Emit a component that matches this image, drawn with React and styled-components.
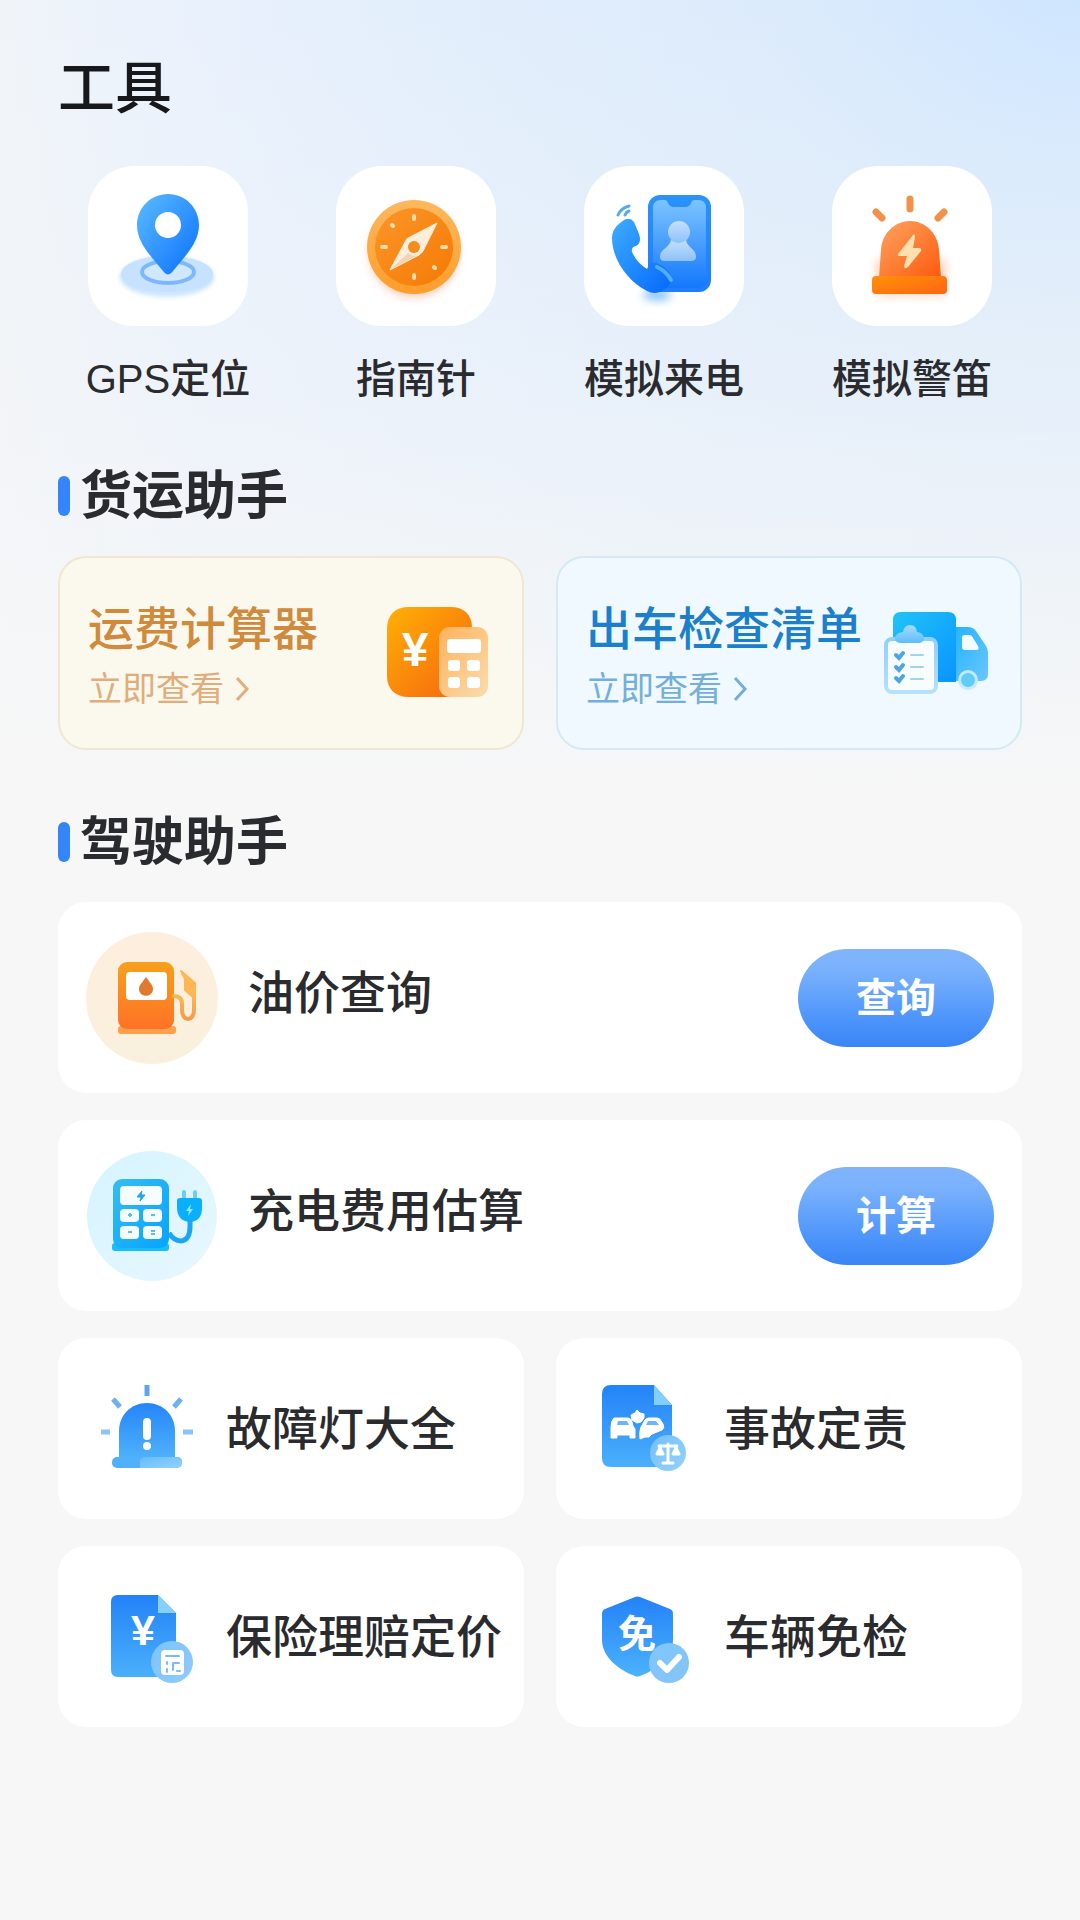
import React from 'react';
import styled, { createGlobalStyle } from 'styled-components';

const GlobalStyle = createGlobalStyle`
  * {
    box-sizing: border-box;
  }

  body {
    margin: 0;
    background: #f7f7f7;
    font-family: 'Liberation Sans', 'Noto Sans CJK SC', sans-serif;
    color: #2a2b2e;
  }
`;

const Page = styled.main`
  min-height: 100vh;
  padding: 52px 0 60px;
  background:
    linear-gradient(to bottom, rgba(247, 247, 247, 0) 0, rgba(247, 247, 247, 0.35) 400px, #f7f7f7 800px),
    radial-gradient(circle 900px at 100% 0, #cfe6ff 0, rgba(218, 234, 251, 0.8) 35%, rgba(222, 236, 252, 0) 100%),
    linear-gradient(to right, #f0f4f9 0, #e9f1fc 200px, #e2eefb 100%);
`;

const Title = styled.h1`
  margin: 0;
  padding: 0 58px;
  font-size: 57px;
  line-height: 72px;
  font-weight: 500;
  color: #17181b;
`;

const ToolNav = styled.nav`
  display: grid;
  grid-template-columns: repeat(4, 1fr);
  margin-top: 42px;
  padding: 0 44px;
`;

const ToolLink = styled.a`
  display: flex;
  flex-direction: column;
  align-items: center;
  gap: 28px;
  font-size: 40px;
  line-height: 50px;
  font-weight: 500;
  color: inherit;
  text-decoration: none;
`;

const ToolTile = styled.span`
  display: flex;
  border-radius: 46px;
  background: #fff;
`;

const Section = styled.section`
  padding: 0 58px;
`;

const SectionTitle = styled.h2`
  display: flex;
  align-items: center;
  gap: 10px;
  margin: 62px 0 30px;
  font-size: 52px;
  line-height: 60px;
  font-weight: 700;

  &::before {
    content: '';
    width: 12px;
    height: 40px;
    border-radius: 6px;
    background: #3484fa;
  }
`;

const Columns = styled.div`
  display: grid;
  grid-template-columns: 1fr 1fr;
  gap: 27px 32px;
`;

const Stack = styled.div`
  display: flex;
  flex-direction: column;
  gap: 27px;
`;

const FreightCard = styled.a`
  display: flex;
  align-items: center;
  justify-content: space-between;
  min-height: 194px;
  padding: 0 28px;
  border: 2px solid ${props => (props.$warm ? '#f0e6d2' : '#d3e9f5')};
  border-radius: 28px;
  background: ${props => (props.$warm ? '#fbf8ee' : '#f0f9ff')};
  color: ${props => (props.$warm ? '#cf8a3c' : '#1b7fcb')};
  text-decoration: none;
`;

const FreightText = styled.span`
  padding-top: 8px;
`;

const FreightName = styled.span`
  display: block;
  margin-bottom: 4px;
  font-size: 46px;
  line-height: 60px;
  font-weight: 500;
  white-space: nowrap;
`;

const FreightMore = styled.span`
  display: flex;
  align-items: center;
  gap: 8px;
  font-size: 34px;
  line-height: 52px;
  color: ${props => (props.$warm ? '#dfae7c' : '#74afdb')};
`;

const Row = styled.div`
  display: flex;
  align-items: center;
  gap: 30px;
  min-height: 191px;
  padding: 0 28px;
  border-radius: 28px;
  background: #fff;
`;

const RowName = styled.h3`
  flex-grow: 1;
  margin: 0;
  padding-bottom: 10px;
  font-size: 46px;
  line-height: 60px;
  font-weight: 500;
`;

const ActionButton = styled.button`
  width: 196px;
  height: 98px;
  padding: 0 0 6px;
  border: none;
  border-radius: 49px;
  background: linear-gradient(to bottom, #80b4fc 0, #7bb2fd 20%, #4a93fb 75%, #3a85f5 100%);
  color: #fff;
  font-family: inherit;
  font-size: 40px;
  font-weight: 700;
  cursor: pointer;
`;

const SmallCard = styled.a`
  display: flex;
  align-items: center;
  gap: 30px;
  min-height: 181px;
  padding-left: 38px;
  border-radius: 28px;
  background: #fff;
  color: inherit;
  font-size: 46px;
  line-height: 60px;
  font-weight: 500;
  text-decoration: none;
  white-space: nowrap;
`;

const Icon = styled.svg`
  display: block;
  flex-shrink: 0;
`;

const IconText = styled.text`
  font-family: 'Liberation Sans', 'Noto Sans CJK SC', sans-serif;
  font-weight: 700;
  fill: #fff;
  text-anchor: middle;
`;

// Two stop gradient, diagonal unless it is told to run straight down
const Gradient = ({ id, from, to, down }) => (
  <linearGradient id={id} x1="0" y1="0" x2={down ? '0' : '1'} y2="1">
    <stop offset="0" stopColor={from} />
    <stop offset="1" stopColor={to} />
  </linearGradient>
);

const Blur = ({ id, size }) => (
  <filter id={id} x="-50%" y="-50%" width="200%" height="200%">
    <feGaussianBlur stdDeviation={size} />
  </filter>
);

const GpsIcon = () => (
  <Icon width="160" height="160" viewBox="0 0 160 160" aria-hidden="true">
    <defs>
      <Gradient id="gps-pin" from="#5cbcff" to="#0a70ff" />
      <Gradient id="gps-base" from="#b9d9fc" to="#cfe7ff" down />
      <Blur id="gps-blur" size="2" />
    </defs>
    <ellipse cx="79" cy="111" rx="47" ry="20" fill="url(#gps-base)" filter="url(#gps-blur)" />
    <ellipse cx="79" cy="108" rx="46" ry="18" fill="#c6e2fe" />
    <ellipse cx="80" cy="106" rx="26" ry="11" fill="#cfe8ff" stroke="#7db9fa" strokeWidth="4" />
    <path
      d="M80 28c-17.500 0-31 14-31 31 0 18 14 31 26 46 3.500 4.500 6.500 4.500 10 0 12-15 26-28 26-46 0-17-13.500-31-31-31z"
      fill="url(#gps-pin)"
    />
    <circle cx="80" cy="59" r="13" fill="#fff" />
  </Icon>
);

const CompassIcon = () => (
  <Icon width="160" height="160" viewBox="0 0 160 160" aria-hidden="true">
    <defs>
      <Gradient id="compass-rim" from="#fdb95e" to="#ff9d2a" down />
      <Gradient id="compass-face" from="#fb9628" to="#f57a05" />
      <Blur id="compass-blur" size="4" />
    </defs>
    <circle cx="78" cy="87" r="45" fill="#f4a582" opacity="0.5" filter="url(#compass-blur)" />
    <circle cx="78" cy="81" r="47" fill="url(#compass-rim)" />
    <circle cx="78" cy="81" r="39" fill="url(#compass-face)" />
    <g stroke="#ffdca8" strokeWidth="4" strokeLinecap="round">
      <path d="M78 50v3M78 109v3M46 81h4M106 81h4M56 59l1 1M98 101l1 1" />
    </g>
    <path
      d="M101 57L72 72q-2 1-3 4L54 104l29-15q3-2 4-4z"
      fill="#fdeedb"
      stroke="#fdeedb"
      strokeLinejoin="round"
    />
    <path d="M54 104l18-17q4 4 10 2z" fill="#f3d3b0" />
    <circle cx="78" cy="81" r="6" fill="#f58c1e" />
  </Icon>
);

const CallIcon = () => (
  <Icon width="160" height="160" viewBox="0 0 160 160" aria-hidden="true">
    <defs>
      <Gradient id="call-body" from="#2a93f8" to="#1f7cff" down />
      <Gradient id="call-screen" from="#7cc4ff" to="#1378fb" down />
      <Gradient id="call-person" from="#c4dffb" to="#8dc2fc" down />
      <Gradient id="call-handset" from="#3eacff" to="#0568fb" />
      <Blur id="call-blur" size="4" />
    </defs>
    <ellipse cx="73" cy="129" rx="14" ry="6" fill="#8cc6ff" filter="url(#call-blur)" />
    <rect x="64" y="29" width="63" height="97" rx="12" fill="url(#call-body)" />
    <path
      d="M77 34h4q2 0 3 3t5 4h13q4-1 5-4t3-3h4q8 0 8 8v72q0 8-8 8H77q-8 0-8-8V42q0-8 8-8z"
      fill="url(#call-screen)"
    />
    <circle cx="95" cy="66" r="11" fill="url(#call-person)" />
    <path d="M87 74q8 6 15 0c1 8 10 8 10 17q0 4-5 4H81q-5 0-5-4c0-9 10-9 11-17z" fill="url(#call-person)" />
    <path
      d="M36 57q9-8 14-1l5 12q3 9-3 12-5 1-4 6 5 11 15 17 3-8 10-6 11 5 14 13 1 8-6 13-9 7-18 2C42 114 28 92 28 72q0-9 8-15z"
      fill="url(#call-handset)"
    />
    <path d="M73 101q9 4 14 13" fill="none" stroke="#50adfd" strokeWidth="4" strokeLinecap="round" />
    <path d="M34 49q3-7 11-9M41 49q1-3 4-4" fill="none" stroke="#5aa9ef" strokeWidth="3" strokeLinecap="round" />
  </Icon>
);

const SirenIcon = () => (
  <Icon width="160" height="160" viewBox="0 0 160 160" aria-hidden="true">
    <defs>
      <Gradient id="siren-dome" from="#ffa461" to="#fd5a0c" />
      <Gradient id="siren-base" from="#ff9207" to="#ff6414" />
      <Blur id="siren-blur" size="4" />
    </defs>
    <rect x="44" y="92" width="70" height="38" rx="6" fill="#ffc3a0" opacity="0.7" filter="url(#siren-blur)" />
    <path d="M47 112l2-28c1-17 14-29 29-29s28 12 29 29l2 28z" fill="url(#siren-dome)" />
    <rect x="40" y="110" width="75" height="18" rx="4" fill="url(#siren-base)" />
    <path d="M81 69L66 88q-1 2 1 2h8l-3 10q0 4 4 1l13-16q1-3-2-3h-6l2-11q0-4-2-2z" fill="#ffe0ae" />
    <g stroke="#f2924a" strokeWidth="7" strokeLinecap="round">
      <path d="M78 33v10M44 46l6 6M112 46l-6 6" />
    </g>
  </Icon>
);

const CalculatorIcon = () => (
  <Icon width="112" height="100" viewBox="0 0 112 100" aria-hidden="true">
    <defs>
      <Gradient id="calc-body" from="#ffb005" to="#f5640f" />
      <Gradient id="calc-card" from="#ffb25a" to="#fbdcae" />
    </defs>
    <path
      d="M27 4h42c12 0 21 7 21 20v48c0 14-9 22-22 22H27C13 94 5 86 5 73V26C5 12 13 4 27 4z"
      fill="url(#calc-body)"
    />
    <rect x="57" y="24" width="49" height="70" rx="11" fill="url(#calc-card)" />
    <rect x="65" y="36" width="34" height="14" rx="3" fill="#fff" />
    <g fill="#fff">
      <rect x="66" y="57" width="12" height="11" rx="3" />
      <rect x="85" y="57" width="13" height="11" rx="3" />
      <rect x="66" y="74" width="12" height="11" rx="3" />
      <rect x="85" y="74" width="13" height="11" rx="3" />
    </g>
    <IconText x="33" y="63" fontSize="48">¥</IconText>
  </Icon>
);

const TruckIcon = () => (
  <Icon width="112" height="100" viewBox="0 0 112 100" aria-hidden="true">
    <defs>
      <Gradient id="truck-box" from="#1fc4f8" to="#0a93ff" />
      <Gradient id="truck-cab" from="#25b4ff" to="#6ac6fb" />
      <Gradient id="truck-board" from="#8fd0fb" to="#b5e1fd" down />
      <Gradient id="truck-clip" from="#a6dcfb" to="#5cbdf8" down />
    </defs>
    <path d="M21 9h47q8 0 8 8v62H13V17q0-8 8-8z" fill="url(#truck-box)" />
    <path d="M76 24h12q5 0 8 4l10 15q2 3 2 7v21q0 7-7 7H76z" fill="url(#truck-cab)" />
    <path d="M82 35q0-3 3-3h4q3 0 4 3l5 8q2 4-2 4H85q-3 0-3-3z" fill="#f4fbff" />
    <circle cx="88" cy="77" r="10" fill="#c4e9fe" />
    <circle cx="88" cy="77" r="7" fill="#5fcdf6" />
    <rect x="6" y="36" width="50" height="53" rx="6" fill="#f7fcff" stroke="url(#truck-board)" strokeWidth="4" />
    <path d="M15 36q0-6 8-7 1-7 7-7t7 7q7 1 7 7 0 3-5 4H20q-5-1-5-4z" fill="url(#truck-clip)" />
    <g fill="none" strokeLinecap="round">
      <path d="M16 52l3 3 4-5M16 64l3 3 4-5M16 75l3 3 4-5" stroke="#4fa5e4" strokeWidth="4" />
      <path d="M31 52h12M31 64h12M31 76h12" stroke="#a4d2ea" strokeWidth="2" />
    </g>
  </Icon>
);

const FuelIcon = () => (
  <Icon width="132" height="132" viewBox="0 0 132 132" aria-hidden="true">
    <defs>
      <Gradient id="fuel-disc" from="#feeedd" to="#f9f1dd" down />
      <Gradient id="fuel-body" from="#f7a01d" to="#ff7226" down />
      <Gradient id="fuel-hose" from="#ffbd55" to="#f59b4a" down />
    </defs>
    <circle cx="66" cy="66" r="66" fill="url(#fuel-disc)" />
    <rect x="32" y="94" width="58" height="8" rx="3" fill="#ffa04b" />
    <rect x="32" y="30" width="56" height="67" rx="9" fill="url(#fuel-body)" />
    <rect x="40" y="40" width="41" height="28" rx="4" fill="#fff" />
    <path d="M60 45c4 6 7 8 7 12 0 9-14 9-14 0 0-4 3-6 7-12z" fill="#e07a2c" />
    <path
      d="M88 64q8 0 8 8v6c0 12 12 12 12 0V58"
      fill="none"
      stroke="url(#fuel-hose)"
      strokeWidth="4"
      strokeLinecap="round"
    />
    <path d="M95 39l14 12v16l-10-9V47z" fill="#ffb756" stroke="#ffb756" strokeWidth="2" strokeLinejoin="round" />
  </Icon>
);

const ChargerIcon = () => (
  <Icon width="132" height="132" viewBox="0 0 132 132" aria-hidden="true">
    <defs>
      <Gradient id="charger-disc" from="#d5f4fe" to="#e8f7ff" />
      <Gradient id="charger-body" from="#35bdf0" to="#05a4ff" />
    </defs>
    <circle cx="66" cy="66" r="65" fill="url(#charger-disc)" />
    <rect x="26" y="93" width="57" height="8" rx="3" fill="#19bdfb" />
    <rect x="27" y="29" width="56" height="69" rx="9" fill="url(#charger-body)" />
    <g fill="#f6fdff">
      <rect x="34" y="36" width="42" height="19" rx="4" />
      <rect x="34" y="59" width="19" height="13" rx="4" />
      <rect x="57" y="59" width="19" height="13" rx="4" />
      <rect x="34" y="76" width="19" height="13" rx="4" />
      <rect x="57" y="76" width="19" height="13" rx="4" />
    </g>
    <path d="M56 41l-5 6h4l-1 4 5-6h-4z" fill="#1ea5ea" stroke="#1ea5ea" strokeWidth="1" />
    <path d="M42 65h4M44 63v4M65 65h4M42 82h4M65 81h4M65 84h4" stroke="#57bff0" strokeWidth="2" />
    <path d="M98 42v8M109 42v8" stroke="#6dccf8" strokeWidth="4" strokeLinecap="round" />
    <path d="M94 48h19q3 0 3 3v7c0 9-5 14-12 14s-13-5-13-14v-7q0-3 3-3z" fill="#0ab0fb" />
    <path d="M105 54l-5 7h3l-1 5 5-7h-3z" fill="#8ee6ff" />
    <path d="M104 70v7c0 18-15 17-21 6" fill="none" stroke="#1aa6f5" strokeWidth="5" />
  </Icon>
);

const WarningLampIcon = () => (
  <Icon width="100" height="100" viewBox="0 0 100 100" aria-hidden="true">
    <defs>
      <Gradient id="lamp-dome" from="#2585f9" to="#50b2fb" down />
      <Gradient id="lamp-base" from="#66bbfb" to="#93d2fd" />
    </defs>
    <rect x="16" y="78" width="70" height="11" rx="5" fill="#50b1fa" />
    <path d="M23 80V52c0-16 12-28 28-28s28 12 28 28v28z" fill="url(#lamp-dome)" />
    <path d="M49 78h32q5 0 5 5t-5 6H44v-6q0-5 5-5z" fill="url(#lamp-base)" />
    <g strokeWidth="5">
      <path d="M51 6v11" stroke="#5ea5ee" />
      <path d="M17 20l7 8M85 20l-7 8" stroke="#6fb0ee" />
      <path d="M5 53h9M87 53h10" stroke="#8cc4f3" />
    </g>
    <path d="M51 43v14" stroke="#fff" strokeWidth="8" strokeLinecap="round" />
    <circle cx="51" cy="67" r="4" fill="#fff" />
  </Icon>
);

const AccidentIcon = () => (
  <Icon width="100" height="100" viewBox="0 0 100 100" aria-hidden="true">
    <defs>
      <Gradient id="accident-doc" from="#2383f8" to="#4bb0fb" down />
      <Gradient id="accident-badge" from="#74bffb" to="#94d1fd" />
    </defs>
    <path d="M17 6h43l18 20v62H17q-9 0-9-9V15q0-9 9-9z" fill="url(#accident-doc)" />
    <path d="M60 6l18 20H60z" fill="#84cefb" />
    <g fill="#fff" stroke="#fff" strokeLinejoin="round">
      <path d="M20 39h14q3 0 4 4l1 4 2 3v9h-5v-3H23v3h-6V48q0-6 3-9z" />
      <path d="M47 48l4-7q1-2 4-2h8q3 0 4 3l2 3q2 4-1 6l-10 4-3 3h-4l-5 2q-1-7 1-12z" />
    </g>
    <path d="M24 42h9l2 4H23zM54 42h8l3 4H52z" fill="#6fb4fa" />
    <path d="M43 31l3 3 4 1v4l-3 4-4 1-5-3-1-5 4-2z" fill="#fff" stroke="#fff" strokeLinejoin="round" />
    <circle cx="74" cy="74" r="18" fill="url(#accident-badge)" />
    <g fill="#fff" stroke="#fff" strokeWidth="3" strokeLinecap="round" strokeLinejoin="round">
      <path d="M74 65v18M65 67h18M69 84h10M66 69l-3 6h6zM82 69l-3 6h6z" />
    </g>
  </Icon>
);

const InsuranceIcon = () => (
  <Icon width="100" height="100" viewBox="0 0 100 100" aria-hidden="true">
    <defs>
      <Gradient id="insurance-doc" from="#2382f8" to="#4bb0fb" down />
      <Gradient id="insurance-badge" from="#7cc4fb" to="#8fcbfb" />
    </defs>
    <path d="M22 8h40l18 18v64H22q-7 0-7-7V15q0-7 7-7z" fill="url(#insurance-doc)" />
    <path d="M62 8l18 18H62z" fill="#86d0fb" />
    <IconText x="47" y="58" fontSize="43">¥</IconText>
    <circle cx="76" cy="75" r="21" fill="url(#insurance-badge)" />
    <rect x="65" y="63" width="23" height="25" rx="4" fill="#fff" />
    <path d="M70 69h13M71 75v2M71 82v3M77 76h6M77 77v6M81 84h3" stroke="#77bdf5" strokeWidth="2" strokeLinecap="round" />
  </Icon>
);

const ShieldIcon = () => (
  <Icon width="100" height="100" viewBox="0 0 100 100" aria-hidden="true">
    <defs>
      <Gradient id="shield-body" from="#2382f8" to="#4bb2fb" down />
      <Gradient id="shield-badge" from="#7ec7fb" to="#85c4f8" />
    </defs>
    <path
      d="M41 10q2-1 5 0l30 12q3 1 3 5v26c0 17-17 30-33 36q-3 1-5 0C25 83 8 70 8 53V27q0-4 3-5z"
      fill="url(#shield-body)"
    />
    <IconText x="43" y="60" fontSize="38">免</IconText>
    <circle cx="75" cy="76" r="20" fill="url(#shield-badge)" />
    <path
      d="M66 76l7 7 12-13"
      fill="none"
      stroke="#fff"
      strokeWidth="6"
      strokeLinecap="round"
      strokeLinejoin="round"
    />
  </Icon>
);

const Chevron = () => (
  <Icon width="20" height="28" viewBox="0 0 20 28" aria-hidden="true">
    <path d="M5 3l10 11L5 25" fill="none" stroke="currentColor" strokeWidth="3" />
  </Icon>
);

const tools = [
  { name: 'GPS定位', icon: GpsIcon },
  { name: '指南针', icon: CompassIcon },
  { name: '模拟来电', icon: CallIcon },
  { name: '模拟警笛', icon: SirenIcon },
];

const freight = [
  { name: '运费计算器', icon: CalculatorIcon, warm: true },
  { name: '出车检查清单', icon: TruckIcon, warm: false },
];

const driving = [
  { name: '油价查询', action: '查询', icon: FuelIcon },
  { name: '充电费用估算', action: '计算', icon: ChargerIcon },
];

const more = [
  { name: '故障灯大全', icon: WarningLampIcon },
  { name: '事故定责', icon: AccidentIcon },
  { name: '保险理赔定价', icon: InsuranceIcon },
  { name: '车辆免检', icon: ShieldIcon },
];

const App = () => (
  <Page>
    <GlobalStyle />
    <Title>工具</Title>

    <ToolNav>
      {tools.map(({ name, icon: ToolIcon }) => (
        <ToolLink key={name} href="#">
          <ToolTile>
            <ToolIcon />
          </ToolTile>
          {name}
        </ToolLink>
      ))}
    </ToolNav>

    <Section>
      <SectionTitle>货运助手</SectionTitle>
      <Columns>
        {freight.map(({ name, icon: CardIcon, warm }) => (
          <FreightCard key={name} href="#" $warm={warm}>
            <FreightText>
              <FreightName>{name}</FreightName>
              <FreightMore $warm={warm}>
                立即查看
                <Chevron />
              </FreightMore>
            </FreightText>
            <CardIcon />
          </FreightCard>
        ))}
      </Columns>
    </Section>

    <Section>
      <SectionTitle>驾驶助手</SectionTitle>
      <Stack>
        {driving.map(({ name, action, icon: RowIcon }) => (
          <Row key={name}>
            <RowIcon />
            <RowName>{name}</RowName>
            <ActionButton type="button">{action}</ActionButton>
          </Row>
        ))}
        <Columns>
          {more.map(({ name, icon: CardIcon }) => (
            <SmallCard key={name} href="#">
              <CardIcon />
              {name}
            </SmallCard>
          ))}
        </Columns>
      </Stack>
    </Section>
  </Page>
);

export default App;
